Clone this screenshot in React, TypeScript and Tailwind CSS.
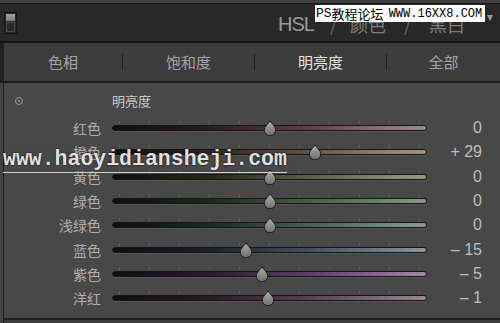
import React from "react";

type Row = { label: string; value: string; pos: number; grad: string };

const rows: Row[] = [
  { label: "红色", value: "0", pos: 0, grad: "bg-[linear-gradient(90deg,#0e0e0e_0%,#2a1a1e_30%,#5e3a46_60%,#8a6f73_85%,#9a8a8a_100%)]" },
  { label: "橙色", value: "+ 29", pos: 29, grad: "bg-[linear-gradient(90deg,#0e0e0e_0%,#2a2420_30%,#5e5046_60%,#8a7e72_85%,#9a9288_100%)]" },
  { label: "黄色", value: "0", pos: 0, grad: "bg-[linear-gradient(90deg,#0e0e0e_0%,#24261c_30%,#545a40_60%,#808868_85%,#959a82_100%)]" },
  { label: "绿色", value: "0", pos: 0, grad: "bg-[linear-gradient(90deg,#0e0e0e_0%,#1c261c_30%,#425a42_60%,#6a866a_85%,#8a9a88_100%)]" },
  { label: "浅绿色", value: "0", pos: 0, grad: "bg-[linear-gradient(90deg,#0e0e0e_0%,#1c2624_30%,#405a54_60%,#688a80_85%,#889a94_100%)]" },
  { label: "蓝色", value: "– 15", pos: -15, grad: "bg-[linear-gradient(90deg,#0e0e0e_0%,#1c1e28_30%,#404a62_60%,#6a7a88_85%,#8a9898_100%)]" },
  { label: "紫色", value: "– 5", pos: -5, grad: "bg-[linear-gradient(90deg,#0e0e0e_0%,#261c2a_30%,#5a3a62_60%,#8a6690_85%,#a08aa4_100%)]" },
  { label: "洋红", value: "– 1", pos: -1, grad: "bg-[linear-gradient(90deg,#0e0e0e_0%,#261a22_30%,#5a3a4c_60%,#806a78_85%,#948a8e_100%)]" },
];

const ticks = [7, 37, 67, 97, 127, 157, 187, 217, 247, 277, 307];

function Thumb() {
  return (
    <svg width="14" height="16" viewBox="0 0 14 16" className="block">
      <defs>
        <linearGradient id="tg" x1="0" y1="0" x2="0" y2="1">
          <stop offset="0" stopColor="#b0b0b0" />
          <stop offset="1" stopColor="#6c6c6c" />
        </linearGradient>
      </defs>
      <path d="M7 0.8 C8.2 3.2 12.8 6.6 12.8 10 A5.8 5.8 0 1 1 1.2 10 C1.2 6.6 5.8 3.2 7 0.8 Z" fill="url(#tg)" stroke="#1c1c1c" strokeWidth="1" />
    </svg>
  );
}

function Slider({ pos, grad }: { pos: number; grad: string }) {
  const left = 157.5 + (pos / 100) * 157.5;
  return (
    <div className="relative w-[315px] h-[24px] flex items-center">
      {ticks.map((t) => (
        <div key={t} className="absolute top-[5px] w-px h-[3px] bg-[#5e5e5e]" style={{ left: t }} />
      ))}
      <div className={`w-full h-[6px] rounded-full border border-[#161616] ${grad} shadow-[0_1px_0_#555]`} />
      <div className="absolute top-[4px]" style={{ left: left - 7 }}>
        <Thumb />
      </div>
    </div>
  );
}

export default function App() {
  return (
    <div
      className="relative w-[500px] h-[323px] overflow-hidden bg-[#3c3c3c] flex flex-col"
      style={{ fontFamily: '"Noto Sans CJK SC", "Liberation Sans", sans-serif' }}
    >
      {/* top strip */}
      <div className="h-[4px] bg-[#3e3e3e] border-b border-[#161616] shrink-0" />
      {/* header */}
      <div className="h-[37px] bg-[#282828] flex items-center shrink-0 relative">
        <div className="ml-[4px] w-[13px] h-[22px] border border-[#141414] flex flex-col p-px gap-px">
          <div className="flex-1 bg-[linear-gradient(180deg,#a4a4a4,#7a7a7a)]" />
          <div className="flex-1 border border-[#4a4a4a] bg-[#2a2a2a]" />
        </div>
        <div className="ml-auto mr-[35px] flex items-center text-[18px] text-[#7e7e7e] leading-none pt-[2px] whitespace-nowrap">
          <span className="text-[#9a9a9a] text-[20px] tracking-[-1px]" style={{ fontFamily: '"Liberation Sans", sans-serif' }}>HSL</span>
          <span className="ml-[16px] text-[#6a6a6a]">/</span>
          <span className="ml-[13px]">颜色</span>
          <span className="ml-[18px] text-[#6a6a6a]">/</span>
          <span className="ml-[18px]">黑白</span>
        </div>
        <div className="absolute right-[7px] top-[11px] w-0 h-0 border-l-[3px] border-r-[3px] border-t-[6px] border-l-transparent border-r-transparent border-t-[#9a9a9a]" />
      </div>
      <div className="h-[2px] bg-[#141414] shrink-0" />
      {/* tabs */}
      <div className="h-[38px] bg-[#3c3c3c] border-l-[4px] border-[#222] flex items-center shrink-0 text-[15px] text-[#a4a4a4]">
        <div className="w-[118px] text-center">色相</div>
        <div className="w-px h-[16px] bg-[#1e1e1e]" />
        <div className="w-[131px] text-center">饱和度</div>
        <div className="w-px h-[16px] bg-[#1e1e1e]" />
        <div className="w-[131px] text-center text-[#e4e4e4]">明亮度</div>
        <div className="w-px h-[16px] bg-[#1e1e1e]" />
        <div className="flex-1 text-center">全部</div>
      </div>
      <div className="h-[2px] bg-[#1c1c1c] shrink-0" />
      {/* main panel */}
      <div className="flex-1 flex">
        <div className="w-[4px] bg-[#434343] border-r border-[#1c1c1c]" />
        <div className="flex-1 bg-[#484848] border-b-[2px] border-[#1e1e1e] mb-[3px] flex flex-col pt-[8px]">
          <div className="h-[20px] flex items-center">
            <div className="ml-[11px] w-[8px] h-[8px] rounded-full border border-[#9a9a9a] flex items-center justify-center">
              <div className="w-[2px] h-[2px] rounded-full bg-[#9a9a9a]" />
            </div>
            <div className="ml-[89px] text-[13px] text-[#c8c8c8]">明亮度</div>
          </div>
          <div className="mt-[5px] flex flex-col">
            {rows.map((r) => (
              <div key={r.label} className="h-[24.3px] flex items-center">
                <div className="w-[97px] text-right text-[14px] text-[#aeaeae] leading-none">{r.label}</div>
                <div className="ml-[11px]">
                  <Slider pos={r.pos} grad={r.grad} />
                </div>
                <div
                  className="flex-1 text-right pr-[18px] text-[16px] text-[#bdbdbd] leading-none"
                  style={{ fontFamily: '"Liberation Sans", sans-serif' }}
                >
                  {r.value}
                </div>
              </div>
            ))}
          </div>
        </div>
      </div>

      {/* watermarks */}
      <div
        className="absolute left-[3px] top-[149px] text-[21.5px] font-bold text-[#e0e0e0] leading-none border-b border-[#cfcfcf] pb-[1px] [text-shadow:0_0_2px_#000] whitespace-nowrap"
        style={{ fontFamily: '"Liberation Mono", monospace' }}
      >
        www.haoyidiansheji.com
      </div>
      <div className="absolute left-[315px] top-[5px] w-[170px] h-[17px] bg-white flex items-center pl-[1px] text-black leading-none whitespace-nowrap overflow-hidden">
        <span className="shrink-0 text-[13px]" style={{ fontFamily: '"Liberation Mono", monospace' }}>PS</span>
        <span className="shrink-0 text-[13px]" style={{ fontFamily: '"Noto Sans CJK SC", sans-serif' }}>教程论坛</span>
        <span className="shrink-0 text-[12px] ml-[5px]" style={{ fontFamily: '"Liberation Mono", monospace' }}>WWW.16XX8.COM</span>
      </div>
    </div>
  );
}
